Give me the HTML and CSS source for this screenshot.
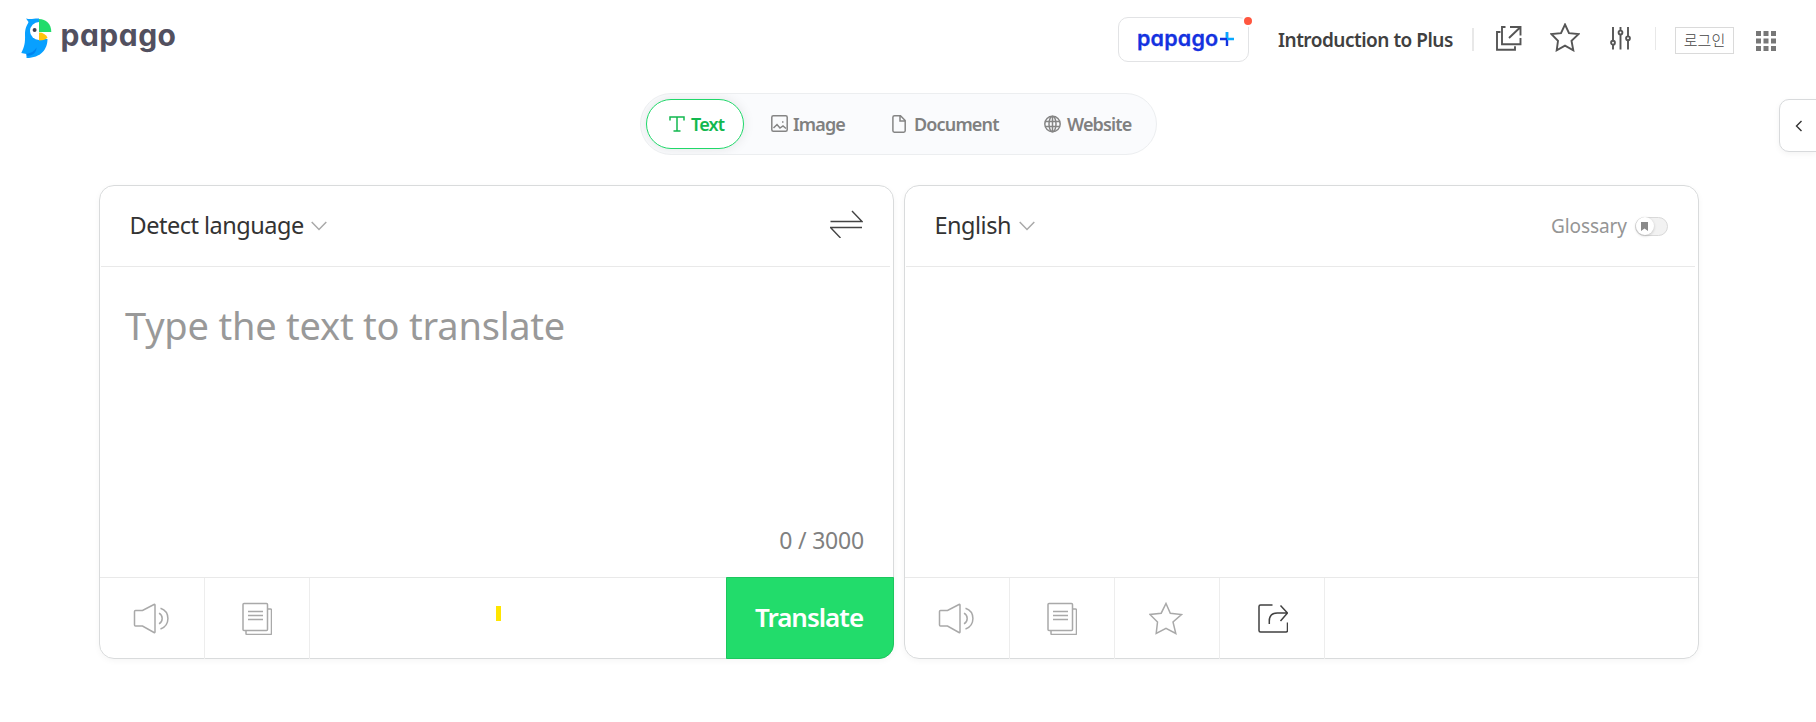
FILE: index.html
```html
<!DOCTYPE html>
<html lang="en">
<head>
<meta charset="utf-8">
<title>Papago</title>
<link rel="stylesheet" href="styles.css">
</head>
<body>
<svg class="defs" width="0" height="0">
  <symbol id="speaker" viewBox="0 0 36 32"><path d="M2.500 7.500h7l11.500-6q1-.5 1 .5v27q0 1-1 .5l-11.500-6.500h-7q-1 0-1-1v-13.500q0-1 1-1zM26 10.200a6 6 0 0 1 0 10.600M27.500 5.200a11 11 0 0 1 0 20.800"/></symbol>
  <symbol id="dict" viewBox="0 0 30 33"><path d="M2 1.500h22.500q1 0 1 1v25q0 1-1 1h-22.500q-1 0-1-1v-25q0-1 1-1zM25.500 7h3q1 0 1 1v23.500q0 1-1 1h-23.500q-1 0-1-1v-3M6 9.500h15M6 13.500h15M6 17.500h15"/></symbol>
  <symbol id="down" viewBox="0 0 16 10"><path d="M.7 1l7.300 7.500 7.300-7.500"/></symbol>
</svg>
<header class="header">
  <a class="logo">
    <svg class="bird" width="31" height="41" viewBox="0 0 31 41">
      <path fill="#08a0ff" d="M5 .5c5 1.500 8-.3 13 0v20.500h8.500c0 10-6.500 19-21 19v-4l-5.200-1c3-6 4-10 3.700-18 0-8 2-9 3.500-13z"/>
      <path fill="#0084f0" d="M5.500 36c5-1 8-3 10-6.500 0 5-4 9-10 8z"/>
      <path fill="#fff" d="M18 4v18a9 9 0 0 1 0-18z"/>
      <path fill="#22dc6b" d="M18 1c7 0 12.300 5 12.300 13h-12.300z"/>
      <path fill="#ffc40e" d="M18 14.500c4 0 7 2 8.500 5-1.500 2-4 3-8.500 3z"/>
      <circle cx="13.600" cy="11.900" r="2" fill="#404050"/>
    </svg>
    <span class="wordmark">papago</span>
  </a>
  <nav class="nav">
    <a class="plus"><span class="plus-text">papago</span><svg width="14" height="14" viewBox="0 0 14 14"><path d="M0 7h7M7 0v14" stroke="#1432e0" stroke-width="2.400"/><path d="M7 7h7M7 0v6" stroke="#08a8ff" stroke-width="2.400"/></svg><i class="dot"></i></a>
    <a class="intro">Introduction to Plus</a>
    <i class="bar wide"></i>
    <svg class="open" width="26" height="25" viewBox="0 0 26 25"><path d="M9.500 1h-3.500v17.200h18.500v-6.200M14 1h10.500v8.500M24 1.500l-11 10.500M4.500 6h-3.500v17.800h18v-3.500"/></svg>
    <svg class="fav" width="30" height="29" viewBox="0 0 30 29"><path d="M15 1.500l4 8.600 9.500 1-7 6.700 1.800 9.500-8.300-4.600-8.300 4.600 1.300-9.500-6.500-6.700 9.500-1z"/></svg>
    <svg class="tune" width="22" height="25" viewBox="0 0 22 25"><path d="M3 1v14M3 18.500v5M10.500 1v3.500M10.500 8v15.500M18 1v9.500M18 14v9.500"/><circle cx="3" cy="16.700" r="1.900"/><circle cx="10.500" cy="6.500" r="1.900"/><circle cx="18" cy="12.300" r="1.900"/></svg>
    <i class="bar"></i>
    <a class="login">로그인</a>
    <svg class="apps" width="20" height="20" viewBox="0 0 20 20"><path d="M0 0h5v5H0zM7.500 0h5v5h-5zM15 0h5v5h-5zM0 7.500h5v5H0zM7.500 7.500h5v5h-5zM15 7.500h5v5h-5zM0 15h5v5H0zM7.500 15h5v5h-5zM15 15h5v5h-5z"/></svg>
  </nav>
</header>
<button class="side"><svg width="8" height="12" viewBox="0 0 8 12"><path d="M6.500 1l-5 5 5 5"/></svg></button>
<div class="tabs">
  <a class="tab active"><svg width="16" height="16" viewBox="0 0 16 16"><path d="M1 4.500v-3.500h14v3.500M8 1v14M4.500 15h7"/></svg><span>Text</span></a>
  <a class="tab image"><svg width="17" height="17" viewBox="0 0 17 17"><rect x=".8" y=".8" width="15.400" height="15.400" rx="1.500"/><path d="M2.500 13l3.500-3.500 3 3.500 3-2 3 2.500M11 7h1.500"/></svg><span>Image</span></a>
  <a class="tab document"><svg width="14" height="18" viewBox="0 0 14 18"><path d="M2.500.8h6l4.700 4.700v10.300q0 1.400-1.400 1.400h-9.400q-1.500 0-1.500-1.400v-13.500q0-1.500 1.600-1.500zM8 1v5h5"/></svg><span>Document</span></a>
  <a class="tab website"><svg width="17" height="18" viewBox="0 0 17 18"><circle cx="8.500" cy="9" r="7.700"/><ellipse cx="8.500" cy="9" rx="3.500" ry="7.700"/><path d="M8.500 1.300v15.400M1.500 6.500h14M1.500 11.500h14"/></svg><span>Website</span></a>
</div>
<main class="panels">
  <section class="panel">
    <div class="head"><span class="lang detect">Detect language</span><svg class="chev" width="16" height="10"><use href="#down"/></svg>
      <svg class="swap" width="33" height="28" viewBox="0 0 33 28"><path d="M.5 11.500h31.500l-10-10.500M32 17.500h-31.500l10 10.500"/></svg></div>
    <div class="body"><p class="placeholder">Type the text to translate</p><p class="count">0 / 3000</p></div>
    <div class="foot">
      <span class="cell sound"><svg width="36" height="32"><use href="#speaker"/></svg></span>
      <span class="cell"><svg width="30" height="33"><use href="#dict"/></svg></span>
      <i class="mark"></i>
      <button class="translate">Translate</button>
    </div>
  </section>
  <section class="panel">
    <div class="head"><span class="lang english">English</span><svg class="chev" width="16" height="10"><use href="#down"/></svg>
      <span class="glossary">Glossary</span><span class="switch"><i class="knob"><svg width="7" height="9" viewBox="0 0 7 9"><path d="M0 0h7v9l-3.500-2.500-3.500 2.500z"/></svg></i></span></div>
    <div class="body"></div>
    <div class="foot">
      <span class="cell sound"><svg width="36" height="32"><use href="#speaker"/></svg></span>
      <span class="cell"><svg width="30" height="33"><use href="#dict"/></svg></span>
      <span class="cell sound"><svg class="star" width="34" height="33" viewBox="0 0 34 33"><path d="M17 1.500l4.300 9.700 11.200 1.300-8.500 7.500 2.800 11.500-9.800-5.200-9.800 5.200 1.300-11.500-7.500-7.500 11.200-1.300z"/></svg></span>
      <span class="cell send"><svg class="share" width="30" height="29" viewBox="0 0 30 29"><path d="M14.500 1h-12q-1.500 0-1.500 1.500v24q0 1.500 1.500 1.500h25.500q1.500 0 1.500-1.500v-8M11.300 20v-3q0-8 8-8h10M22.500 1.500l7 7.500-7 8"/></svg></span>
    </div>
  </section>
</main>
</body>
</html>
```
FILE: styles.css
```css
* { box-sizing: border-box; }
body { margin: 0; width: 1816px; height: 722px; overflow: hidden; background: #fff; font-family: "Noto Sans", "Noto Sans CJK KR", sans-serif; position: relative; }
.defs { position: absolute; }
svg { fill: none; stroke: #a9a9a9; stroke-width: 1.5; flex: none; display: block; }
a, span { white-space: nowrap; }
.header { height: 93px; display: flex; justify-content: space-between; align-items: flex-start; padding: 17px 40px 0 21px; }
.logo { display: flex; align-items: flex-start; }
.bird { stroke: none; margin-top: 1px; }
.wordmark { margin-left: 8.5px; font: 700 30px/36px Inter, sans-serif; font-feature-settings: "cv11"; color: #52505f; letter-spacing: .5px; }
.nav { display: flex; align-items: flex-start; }
.plus { position: relative; width: 131px; height: 45px; border: 1px solid #e2e3e5; border-radius: 10px; display: flex; padding: 0 0 0 18px; }
.plus-text { width: 83px; font: 600 21.5px/40px Inter, sans-serif; font-feature-settings: "cv11"; color: #1432e0; letter-spacing: .2px; -webkit-text-stroke: .3px #1432e0; }
.plus svg { margin-top: 14px; }
.dot { position: absolute; right: -6px; top: -3px; width: 12px; height: 12px; border: 2px solid #fff; border-radius: 50%; background: #ff563f; }
.intro { width: 176px; margin-left: 29px; font-size: 19px; line-height: 24px; margin-top: 11px; font-weight: 600; color: #404040; letter-spacing: -.5px; }
.bar { width: 1px; height: 23px; background: #e8e8e8; margin-top: 10px; }
.wide { width: 2px; margin: 11px 0 0 18px; }
.nav > svg { stroke: #555; stroke-width: 1.9; }
.open { margin: 9px 1px 0 22px; }
.fav { margin: 6px 0 0 27px; }
.tune { margin: 9px 23px 0 30px; }
.login { width: 59px; height: 27px; border: 1px solid #dadada; margin: 10px 0 0 19px; text-align: center; font: 300 15px/24px "Noto Sans CJK KR", sans-serif; color: #444; }
.nav > .apps { fill: #777; stroke: none; margin: 14px 0 0 22px; }
.side { position: absolute; right: -1px; top: 99px; width: 38px; height: 53px; border: 1px solid #d8dadc; border-radius: 10px 0 0 10px; background: #fff; box-shadow: 0 2px 6px #0000000d; padding: 1px 0 0 15px; }
.side svg { stroke: #333; stroke-width: 1.4; }
.tabs { width: 517px; height: 62px; margin-left: 640px; padding: 5px; border: 1px solid #eceef0; border-radius: 31px; background: #fafbfd; display: flex; align-items: center; overflow: hidden; }
.tab { display: flex; align-items: center; font-size: 18px; font-weight: 600; letter-spacing: -.85px; color: #808080; }
.tab svg { stroke: #858585; margin-top: -1px; }
.tab span { margin-left: 6px; }
.active { width: 98px; height: 50px; flex: none; border: 1px solid #20d86a; border-radius: 25px; padding-left: 22px; background: #fff; color: #12b84f; box-shadow: 0 0 12px #00000018; }
.active svg { stroke: #12b84f; }
.image { margin-left: 27px; width: 121px; }
.image span { margin-left: 5px; }
.document { width: 152px; }
.document span { margin-left: 8px; }
.website span { margin-left: 6px; }
.panels { display: flex; gap: 10px; margin: 30px 0 0 99px; }
.panel { width: 795px; height: 474px; border: 1px solid #d9dbdc; border-radius: 15px; display: flex; flex-direction: column; box-shadow: 0 2px 6px #0000000a; }
.head { height: 81px; margin: 0 3px 0 1px; padding: 0 27px 0 28.5px; border-bottom: 1px solid #e9e9e9; display: flex; align-items: center; }
.lang { font-size: 23.5px; color: #333; letter-spacing: -.5px; padding-bottom: 3px; }
.detect { width: 181.5px; }
.english { width: 84.5px; }
.swap { margin-left: auto; stroke: #444; stroke-width: 1.400; margin-top: -4px; }
.glossary { margin-left: auto; font-size: 19px; color: #959595; width: 84px; letter-spacing: -.1px; }
.switch { width: 33px; height: 19px; border: 1px solid #d9d9d9; border-radius: 10px; background: #f2f2f2; }
.knob { display: flex; align-items: center; justify-content: center; width: 18px; height: 18px; margin: -.5px 0 0 -.5px; border-radius: 50%; background: #fff; box-shadow: 0 1px 3px #0003; }
.knob svg { fill: #8a8a8a; stroke: none; }
.body { flex: 1; display: flex; flex-direction: column; justify-content: space-between; padding: 31px 29px 17px 25px; }
p { margin: 0; }
.placeholder { font-size: 38px; line-height: 54px; color: #999; letter-spacing: -.21px; }
.count { text-align: right; font-size: 23px; line-height: 40px; color: #808080; letter-spacing: -.2px; }
.foot { height: 82px; border-top: 1px solid #e9e9e9; display: flex; margin-bottom: -1px; }
.cell { width: 105px; height: 81px; border-right: 1px solid #ededed; display: flex; align-items: center; justify-content: center; }
.sound { padding-right: 2px; }
.send { padding-left: 2px; }
.share { stroke: #404040; }
.mark { width: 5px; height: 15px; background: #ffe500; margin: 28px 0 0 186px; }
.translate { width: 168px; height: 82px; margin: -1px -1px 0 auto; background: #22dc6b; border: 1px solid #1cc75e; border-radius: 0 0 15px 0; color: #fff; font: 600 26px "Noto Sans", sans-serif; letter-spacing: -1px; padding: 0 2px 2px 0; }
```
